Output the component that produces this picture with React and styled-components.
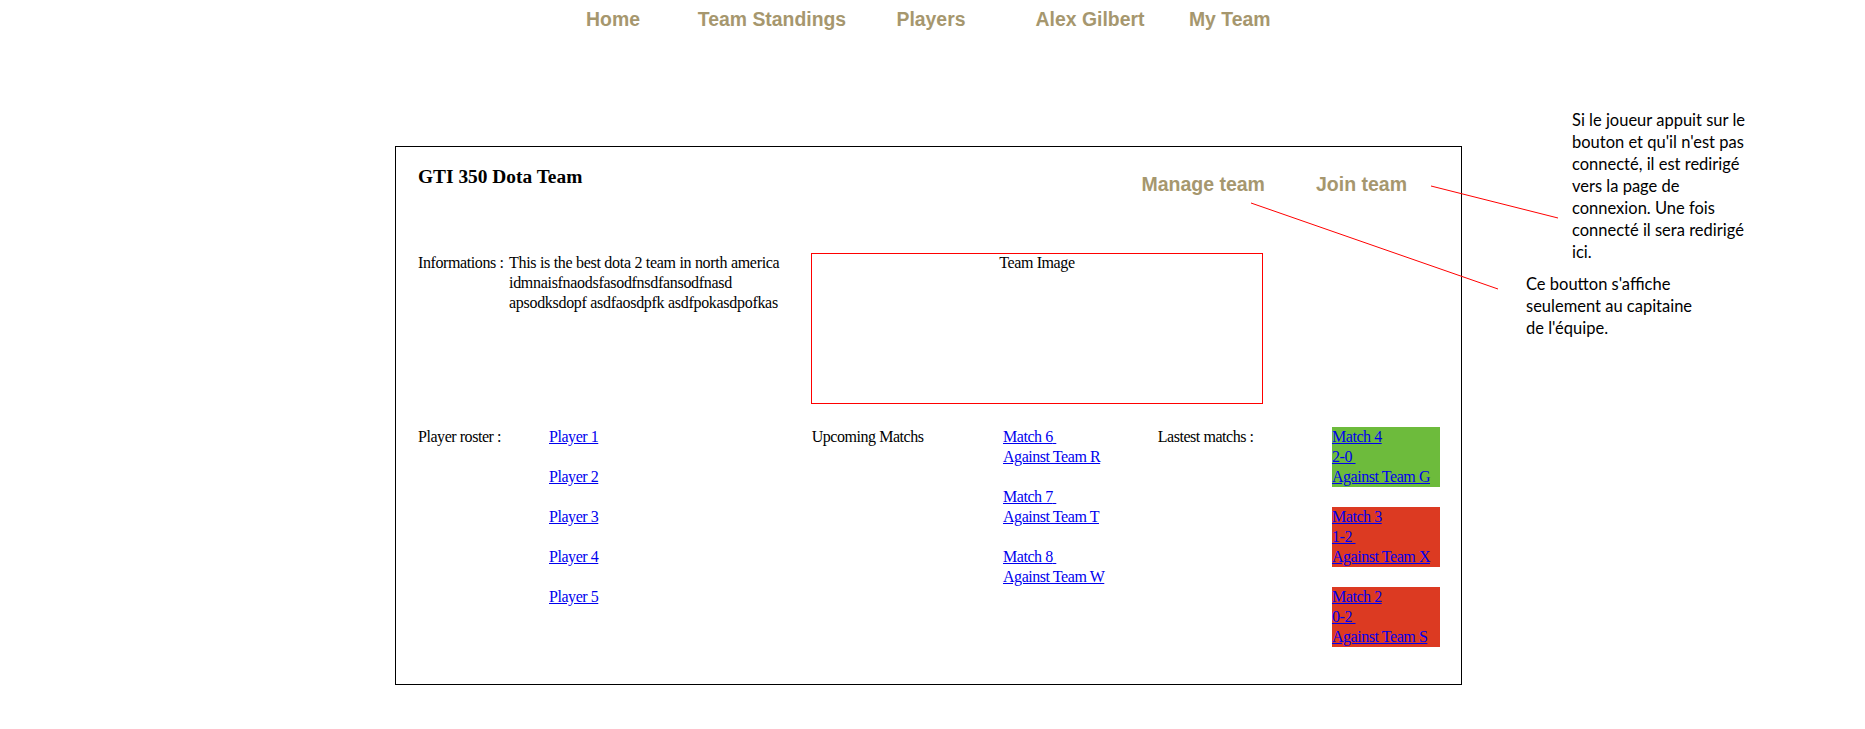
import React from "react";
import styled, { createGlobalStyle } from "styled-components";

const GlobalStyle = createGlobalStyle`
  html, body {
    margin: 0;
    padding: 0;
    background: #ffffff;
  }
  body {
    font-family: "Liberation Serif", "Times New Roman", serif;
    font-size: 16px;
    color: #000000;
  }
`;

const Page = styled.div`
  position: relative;
  width: 1865px;
  min-height: 729px;
`;

const Nav = styled.nav`
  display: flex;
  height: 30px;
  box-sizing: border-box;
  padding: 8px 0 0 533.5px;
`;

const NavItem = styled.a`
  width: ${(p) => p.$w}px;
  text-align: center;
  font-family: "Liberation Sans", Arial, sans-serif;
  font-weight: bold;
  font-size: 19.4px;
  line-height: 22px;
  color: #a6976e;
  text-decoration: none;
  white-space: nowrap;
`;

const Card = styled.section`
  margin: 116px 0 0 395px;
  width: 1067px;
  box-sizing: border-box;
  border: 1px solid #000000;
  padding: 19px 0 37px 22px;
`;

const Header = styled.div`
  display: flex;
  justify-content: space-between;
  align-items: flex-start;
  height: 30px;
  padding-right: 54px;
`;

const Title = styled.h1`
  margin: 0;
  font-family: "Liberation Serif", "Times New Roman", serif;
  font-size: 19.4px;
  font-weight: bold;
  line-height: 22px;
`;

const Actions = styled.div`
  display: flex;
  gap: 51px;
  margin-top: 7px;
`;

const ActionLink = styled.a`
  font-family: "Liberation Sans", Arial, sans-serif;
  font-weight: bold;
  font-size: 19.5px;
  line-height: 22px;
  color: #a6976e;
  text-decoration: none;
  white-space: nowrap;
`;

const InfoRow = styled.div`
  display: grid;
  grid-template-columns: 91px 302px 452px;
  margin-top: 57px;
  line-height: 20px;
  letter-spacing: -0.4px;
`;

const Label = styled.div`
  white-space: nowrap;
`;

const Description = styled.p`
  margin: 0;
  letter-spacing: -0.3px;
`;

const ImageFrame = styled.div`
  height: 151px;
  box-sizing: border-box;
  border: 1px solid #ff0000;
  text-align: center;
  line-height: 18px;
`;

const BottomRow = styled.div`
  display: grid;
  grid-template-columns: 131px 262.7px 191.3px 154.7px 174.3px 108px;
  margin-top: 23px;
  line-height: 20px;
  letter-spacing: -0.45px;
`;

const Stack = styled.div`
  display: flex;
  flex-direction: column;
  align-items: flex-start;
  gap: 20px;
`;

const Link = styled.a`
  color: #0000ee;
  text-decoration: underline;
  white-space: nowrap;
  cursor: pointer;
`;

const ResultBox = styled.div`
  width: 108px;
  height: 60px;
  background: ${(p) => (p.$won ? "#6dbb3c" : "#dc3a22")};
`;

const Overlay = styled.svg`
  position: absolute;
  left: 0;
  top: 0;
  width: 1865px;
  height: 729px;
  pointer-events: none;
`;

const Note = styled.p`
  position: absolute;
  left: ${(p) => p.$x}px;
  top: ${(p) => p.$y}px;
  margin: 0;
  font-family: Lato, "Open Sans", sans-serif;
  font-size: 16.5px;
  line-height: 22px;
  color: #000000;
  white-space: nowrap;
`;

const navItems = [
  { label: "Home", w: 159 },
  { label: "Team Standings", w: 159 },
  { label: "Players", w: 159 },
  { label: "Alex Gilbert", w: 159 },
  { label: "My Team", w: 120.4 },
];

const players = ["Player 1", "Player 2", "Player 3", "Player 4", "Player 5"];

const upcoming = [
  { match: "Match 6", team: "Against Team R" },
  { match: "Match 7", team: "Against Team T" },
  { match: "Match 8", team: "Against Team W" },
];

const results = [
  { match: "Match 4", score: "2-0", team: "Against Team G", won: true },
  { match: "Match 3", score: "1-2", team: "Against Team X", won: false },
  { match: "Match 2", score: "0-2", team: "Against Team S", won: false },
];

const note1 = [
  "Si le joueur appuit sur le",
  "bouton et qu'il n'est pas",
  "connecté, il est redirigé",
  "vers la page de",
  "connexion. Une fois",
  "connecté il sera redirigé",
  "ici.",
];

const note2 = ["Ce boutton s'affiche", "seulement au capitaine", "de l'équipe."];

function Lines({ lines }) {
  return lines.map((l, i) => (
    <React.Fragment key={i}>
      {l}
      {i < lines.length - 1 && <br />}
    </React.Fragment>
  ));
}

export default function App() {
  return (
    <Page>
      <GlobalStyle />
      <Nav>
        {navItems.map((n) => (
          <NavItem key={n.label} $w={n.w}>
            {n.label}
          </NavItem>
        ))}
      </Nav>

      <Card>
        <Header>
          <Title>GTI 350 Dota Team</Title>
          <Actions>
            <ActionLink>Manage team</ActionLink>
            <ActionLink>Join team</ActionLink>
          </Actions>
        </Header>

        <InfoRow>
          <Label>Informations :</Label>
          <Description>
            This is the best dota 2 team in north america
            <br />
            idmnaisfnaodsfasodfnsdfansodfnasd
            <br />
            apsodksdopf asdfaosdpfk asdfpokasdpofkas
          </Description>
          <ImageFrame>Team Image</ImageFrame>
        </InfoRow>

        <BottomRow>
          <Label>Player roster :</Label>
          <Stack>
            {players.map((p) => (
              <Link key={p}>{p}</Link>
            ))}
          </Stack>
          <Label>Upcoming Matchs</Label>
          <Stack>
            {upcoming.map((m) => (
              <Link key={m.match}>
                {m.match}
                {"\u00a0"}
                <br />
                {m.team}
              </Link>
            ))}
          </Stack>
          <Label>Lastest matchs :</Label>
          <Stack>
            {results.map((r) => (
              <ResultBox key={r.match} $won={r.won}>
                <Link>
                  {r.match}
                  <br />
                  {r.score}
                  {"\u00a0"}
                  <br />
                  {r.team}
                </Link>
              </ResultBox>
            ))}
          </Stack>
        </BottomRow>
      </Card>

      <Overlay viewBox="0 0 1865 729">
        <line x1="1251" y1="203" x2="1498" y2="289" stroke="#ff0000" strokeWidth="1" />
        <line x1="1431" y1="186" x2="1558" y2="218" stroke="#ff0000" strokeWidth="1" />
      </Overlay>

      <Note $x={1572} $y={109}>
        <Lines lines={note1} />
      </Note>
      <Note $x={1526} $y={273}>
        <Lines lines={note2} />
      </Note>
    </Page>
  );
}
